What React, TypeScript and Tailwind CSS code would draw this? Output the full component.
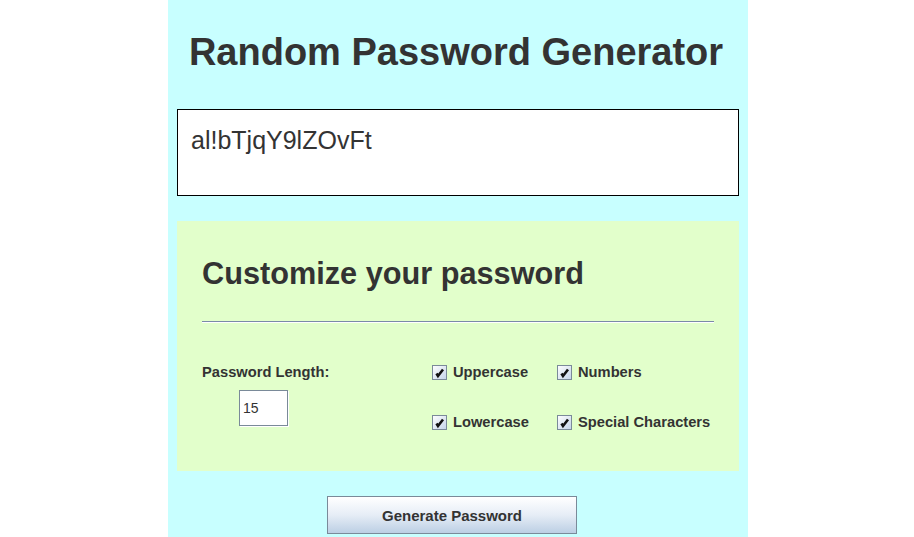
import { useState } from 'react'

const options = [
  { key: 'upper', label: 'Uppercase' },
  { key: 'numbers', label: 'Numbers' },
  { key: 'lower', label: 'Lowercase' },
  { key: 'special', label: 'Special Characters' },
]

function CheckBox({ checked }: { checked: boolean }) {
  return (
    <svg width="15" height="15" viewBox="0 0 15 15" className="shrink-0">
      <defs>
        <linearGradient id="cbg" x1="0" y1="0" x2="1" y2="1">
          <stop offset="0" stopColor="#ffffff" />
          <stop offset="1" stopColor="#c3d3e8" />
        </linearGradient>
      </defs>
      <rect x="0.5" y="0.5" width="14" height="14" fill="url(#cbg)" stroke="#7a8a99" />
      {checked && <path d="M4.5 8.5 L6 11 L11 4.5" fill="none" stroke="#111" strokeWidth="2.6" />}
    </svg>
  )
}

export default function App() {
  const [length, setLength] = useState('15')
  const [checked, setChecked] = useState<Record<string, boolean>>({
    upper: true,
    numbers: true,
    lower: true,
    special: true,
  })

  return (
    <div className="h-[537px] w-full bg-white overflow-hidden font-['Liberation_Sans',Arial,sans-serif] text-[#333333]">
      <div className="ml-[168px] w-[580px] h-full bg-[#c8ffff] px-[9px]">
        {/* Title */}
        <h1 className="pt-[30px] pr-[4px] h-[74px] text-center text-[38px] leading-[44px] font-bold">
          Random Password Generator
        </h1>

        {/* Output */}
        <div className="mt-[35px] h-[87px] border border-black bg-white pl-[13px] pt-[15px] text-[25px] leading-[30px]">
          al!bTjqY9lZOvFt
        </div>

        {/* Options panel */}
        <div className="mt-[25px] h-[250px] bg-[#e2ffcb] px-[25px] pt-[35px]">
          <h2 className="text-[30.7px] leading-[36px] font-bold">Customize your password</h2>
          <div className="mt-[29px] border-t border-[#7a8aa8] border-b border-b-white" />

          <div className="mt-[39px] flex text-[14.7px] leading-[20px] font-bold">
            <div className="w-[230px]">
              <div>Password Length:</div>
              <input
                value={length}
                onChange={(e) => setLength(e.target.value)}
                className="mt-[8px] ml-[37px] w-[49px] h-[36px] bg-white border border-[#7a8a99] shadow-[1px_1px_0_#ffffff] pl-[3px] font-normal text-[14px] text-[#333] outline-none"
              />
            </div>
            <div className="grid grid-cols-[125px_auto] gap-y-[30px]">
              {options.map((o) => (
                <label
                  key={o.key}
                  className="flex items-center gap-[6px] h-[20px] cursor-pointer"
                  onClick={() => setChecked({ ...checked, [o.key]: !checked[o.key] })}
                >
                  <CheckBox checked={checked[o.key]} />
                  <span>{o.label}</span>
                </label>
              ))}
            </div>
          </div>
        </div>

        {/* Generate */}
        <button className="mt-[25px] ml-[150px] w-[250px] h-[38px] pt-[3px] border border-[#7a8a99] bg-gradient-to-b from-white via-[#e6edf6] to-[#bccfe4] text-[15px] font-bold text-[#333]">
          Generate Password
        </button>
      </div>
    </div>
  )
}
